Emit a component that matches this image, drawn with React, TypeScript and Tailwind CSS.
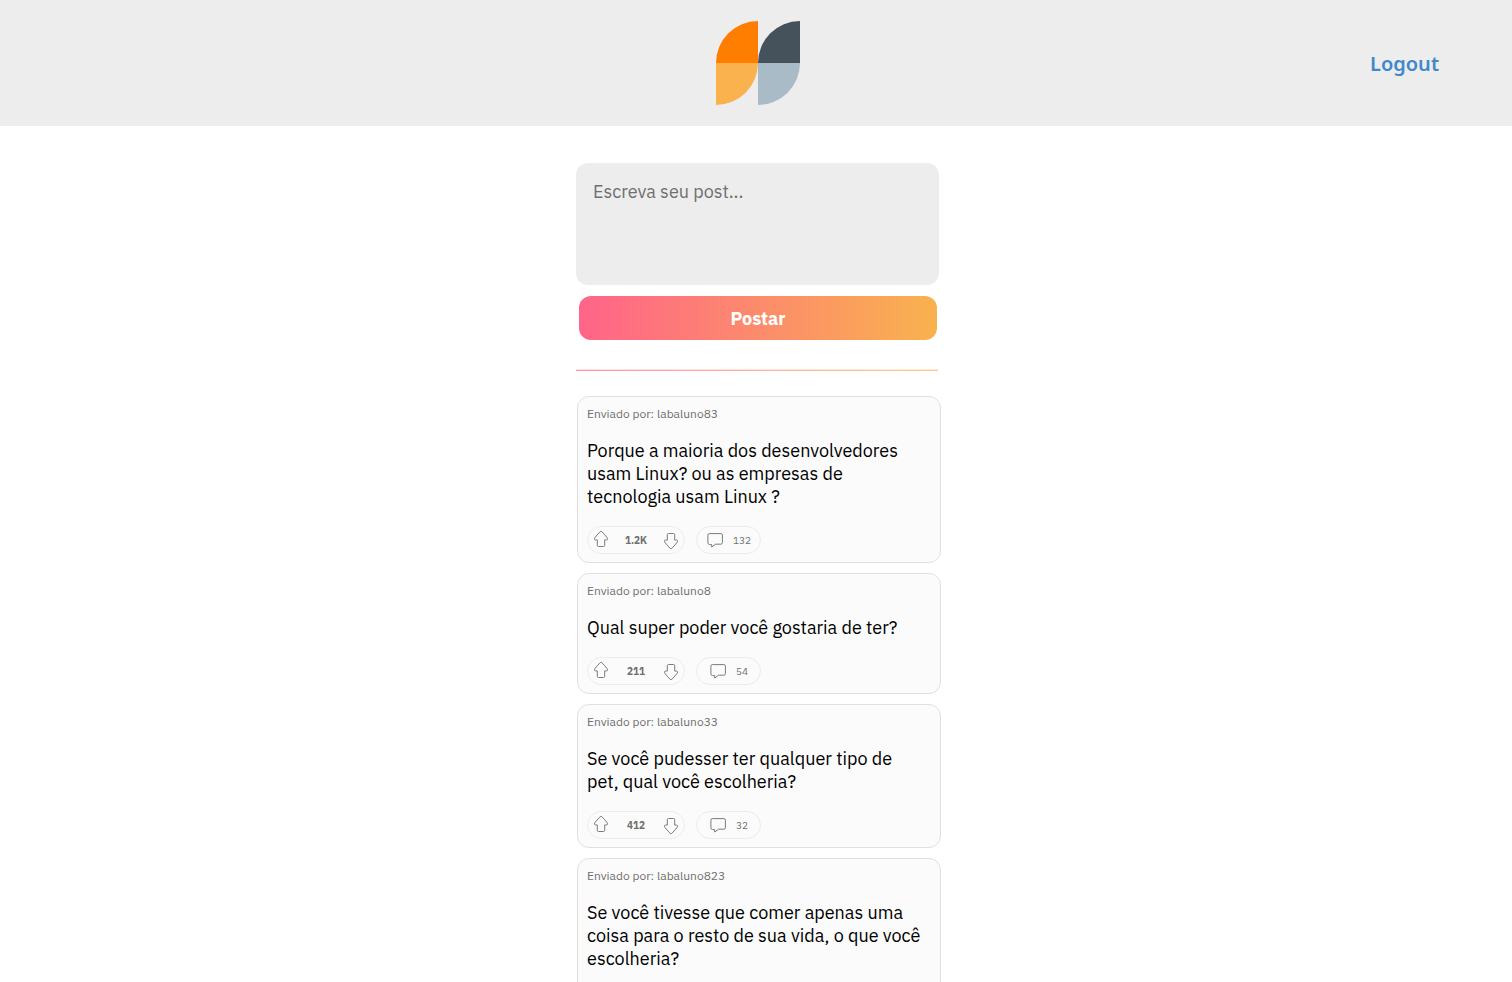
import React from "react";

type Post = {
  id: number;
  author: string;
  content: string;
  votes: string;
  comments: string;
};

const posts: Post[] = [
  {
    id: 1,
    author: "labaluno83",
    content:
      "Porque a maioria dos desenvolvedores usam Linux? ou as empresas de tecnologia usam Linux ?",
    votes: "1.2K",
    comments: "132",
  },
  {
    id: 2,
    author: "labaluno8",
    content: "Qual super poder você gostaria de ter?",
    votes: "211",
    comments: "54",
  },
  {
    id: 3,
    author: "labaluno33",
    content: "Se você pudesser ter qualquer tipo de pet, qual você escolheria?",
    votes: "412",
    comments: "32",
  },
  {
    id: 4,
    author: "labaluno823",
    content:
      "Se você tivesse que comer apenas uma coisa para o resto de sua vida, o que você escolheria?",
    votes: "",
    comments: "",
  },
];

function Logo() {
  return (
    <svg viewBox="0 0 84 84" className="size-21" aria-hidden="true">
      <path d="M0 42A42 42 0 0 1 42 0V42Z" fill="#ff7e00" />
      <path d="M0 42H42A42 42 0 0 1 0 84Z" fill="#f9b24e" />
      <path d="M42 42A42 42 0 0 1 84 0V42Z" fill="#45525b" />
      <path d="M42 42H84A42 42 0 0 1 42 84Z" fill="#a8bbc6" />
    </svg>
  );
}

function ArrowIcon({ down = false }: { down?: boolean }) {
  return (
    <svg
      viewBox="0 0 16 18"
      className={down ? "h-[18px] w-4 rotate-180" : "h-[18px] w-4"}
      fill="none"
      stroke="#7a7a7a"
      strokeWidth="1"
      strokeLinejoin="round"
      aria-hidden="true"
    >
      <path d="M7.2 1.6Q8 .9 8.8 1.6Q12 4.8 14.5 8.2Q14.9 9.8 13.7 9.9H11.7V15.3Q11.7 16.5 10.5 16.5H5.5Q4.3 16.5 4.3 15.3V9.9H2.3Q1.1 9.8 1.5 8.2Q4 4.8 7.2 1.6Z" />
    </svg>
  );
}

function CommentIcon() {
  return (
    <svg
      viewBox="0 0 16 16"
      className="size-4"
      fill="none"
      stroke="#7a7a7a"
      strokeWidth="1"
      strokeLinejoin="round"
      aria-hidden="true"
    >
      <path d="M2.2 1.6H13.8Q15.4 1.6 15.4 3.2V10.6Q15.4 12.2 13.8 12.2H8.6L4.7 15V12.6H2.5Q.9 12.4 .9 10.8V3.2Q.9 1.6 2.2 1.6Z" />
    </svg>
  );
}

function PostCard({ post }: { post: Post }) {
  return (
    <article className="rounded-xl border border-[#e0e0e0] bg-[#fbfbfb] px-[9px] pt-[9px] pb-2">
      <p className="text-xs leading-4 text-[#6f6f6f]">Enviado por: {post.author}</p>
      <p className="mt-[17px] pr-[9px] text-lg leading-[23px] text-black">{post.content}</p>
      <div className="mt-[18px] flex gap-[11px]">
        <div className="flex h-7 w-[98px] items-center justify-between rounded-full border border-[#ececec] px-[5px]">
          <button type="button" aria-label="Curtir" className="pb-[2px]">
            <ArrowIcon />
          </button>
          <span className="pt-[2px] text-[10px] leading-4 font-bold text-[#6f6f6f]">
            {post.votes}
          </span>
          <button type="button" aria-label="Descurtir" className="pt-[2px]">
            <ArrowIcon down />
          </button>
        </div>
        <button
          type="button"
          aria-label="Comentários"
          className="flex h-7 w-[65px] items-center justify-center gap-[10px] rounded-full border border-[#ececec] pl-px text-[10px] leading-4 text-[#6f6f6f]"
        >
          <CommentIcon />
          <span className="pt-[2px]">{post.comments}</span>
        </button>
      </div>
    </article>
  );
}

export default function App() {
  return (
    <div className="h-screen overflow-x-hidden overflow-y-auto bg-white font-['IBM_Plex_Sans','Noto_Sans',sans-serif] antialiased [scrollbar-width:none]">
      <header className="grid h-[126px] grid-cols-[1fr_auto_1fr] items-center bg-[#ededed] pr-[73px] pl-[77px]">
        <div />
        <Logo />
        <a
          href="#logout"
          className="justify-self-end pt-[2px] font-['Noto_Sans',sans-serif] text-xl leading-7 font-semibold text-[#4088cb]"
        >
          Logout
        </a>
      </header>
      <main className="pt-[37px] pb-10 pl-[5px]">
        <div className="mx-auto max-w-[365px]">
          <form onSubmit={(e) => e.preventDefault()}>
            <textarea
              aria-label="Escreva seu post"
              placeholder="Escreva seu post..."
              className="block h-[122px] w-[363px] max-w-full resize-none rounded-xl bg-[#ededed] px-[17px] py-[17px] text-lg leading-[23px] outline-none placeholder:text-[#6f6f6f]"
            />
            <div className="mt-[11px] pr-1 pl-[3px]">
              <button
                type="submit"
                className="h-11 w-full rounded-xl bg-linear-to-r/srgb from-[#ff6489] to-[#f9b24e] pt-[2px] text-lg leading-6 font-bold text-white"
              >
                Postar
              </button>
            </div>
          </form>
          <div className="mt-[29px] mr-[3px] h-[2px] bg-linear-to-r/srgb from-[#ff6489] to-[#f9b24e] mask-t-from-0% opacity-90" />
          <div className="mt-[25px] ml-px flex flex-col gap-[10px]">
            {posts.map((post) => (
              <PostCard key={post.id} post={post} />
            ))}
          </div>
        </div>
      </main>
    </div>
  );
}
